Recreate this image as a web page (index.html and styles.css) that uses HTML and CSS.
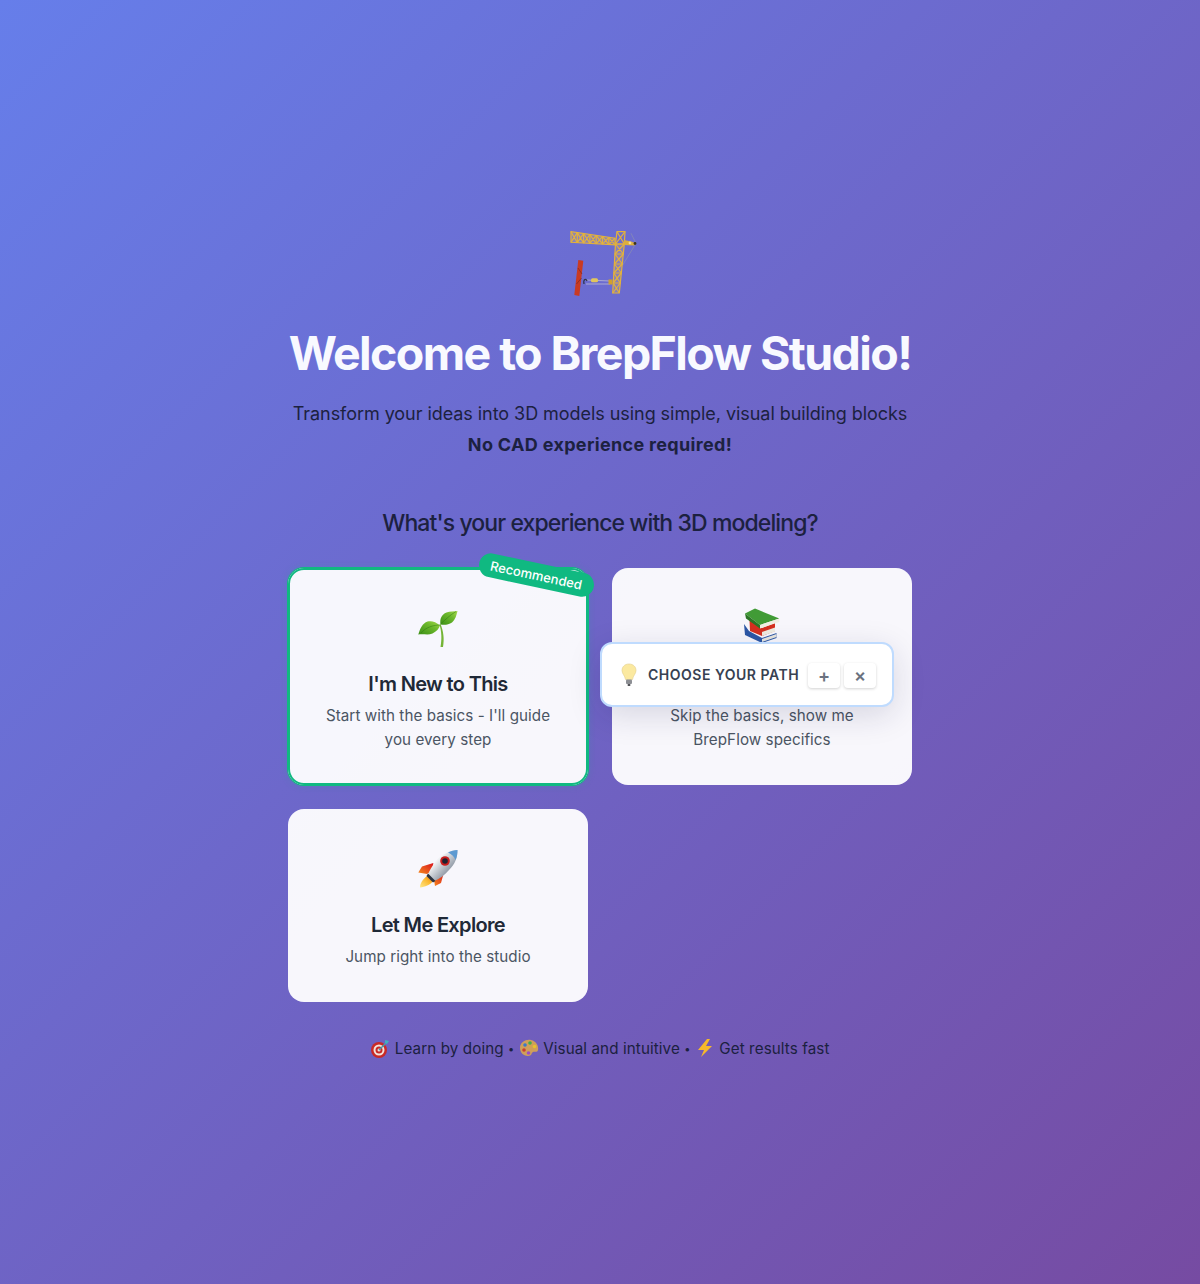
FILE: index.html
```html
<!DOCTYPE html>
<html lang="en">
<head>
<meta charset="utf-8">
<title>BrepFlow Studio</title>
<link rel="stylesheet" href="styles.css">
</head>
<body>
<main class="welcome">
  <svg class="crane" viewBox="0 0 68 66" aria-hidden="true">
    <path d="M61 2.300 L66 12.300 L52.700 34" fill="none" stroke="#8b8fb0" stroke-width=".7"/>
    <path d="M1 .7 L45 7.200 L44.500 13.900 L1 11.300Z" fill="#e8c263" fill-opacity=".25"/>
    <path d="M45 13 L54.300 13 L49.300 62 L42.700 62Z" fill="#e8c263" fill-opacity=".22"/>
    <g fill="none" stroke="#e3b23c" stroke-width="1.200">
      <path d="M1 .7 L45 7.200 V13.900 L1 11.300Z"/>
      <path d="M7.300 1.600V11.700M13.600 2.500V12.100M19.900 3.500V12.400M26.200 4.400V12.800M32.500 5.300V13.200M38.800 6.300V13.600"/>
      <path d="M1 .7L7.300 11.700M7.300 1.600L1 11.300M7.300 1.600L13.600 12.100M13.600 2.500L7.300 11.700M13.600 2.500L19.900 12.400M19.900 3.500L13.600 12.100M19.900 3.500L26.200 12.800M26.200 4.400L19.900 12.400M26.200 4.400L32.500 13.200M32.500 5.300L26.200 12.800M32.500 5.300L38.800 13.600M38.800 6.300L32.500 13.200M38.800 6.300L45 13.900M45 7.200L38.800 13.600"/>
      <path d="M47 .7 H55 L54.300 13 H45.500Z"/>
      <path d="M47 .7L54.300 13M55 .7L45.500 13"/>
      <path d="M45.500 13 L42.700 62 H49.300 L54.300 13Z"/>
      <path d="M45 23H53.300M44.400 33H52.300M43.800 42H51.300M43.200 52H50.300"/>
      <path d="M45.500 13L53.300 23M54.300 13L45 23M45 23L52.300 33M53.300 23L44.400 33M44.400 33L51.300 42M52.300 33L43.800 42M43.800 42L50.300 52M51.300 42L43.200 52M43.200 52L49.300 62M50.300 52L42.700 62"/>
    </g>
    <path d="M54 9 L61 10.500 L66 12.300 L64 14.500 L54 14Z" fill="#dcae3c"/>
    <circle cx="65" cy="12.500" r="1.400" fill="#3a3320"/>
    <circle cx="60" cy="12" r="1.400" fill="#f2dc98"/>
    <path d="M8.300 29 L13.300 29.700 L9.300 65 L4.300 64Z" fill="#c93a22"/>
    <path d="M8 37l4 6M6.500 53l5-6" stroke="#7d2a1c" stroke-width=".7"/>
    <path d="M16 49 L40 50 M16 53 L40 53" stroke="#c9c6d6" stroke-width=".7"/>
    <path d="M14 53c-1-5 2-6 3-3" fill="none" stroke="#2e3448" stroke-width="1.200"/>
    <rect x="21" y="47.300" width="7" height="4" rx="1.500" fill="#e2c65c"/>
    <rect x="38.500" y="48.500" width="4" height="5" fill="#cfa030"/>
  </svg>
  <h1 class="title">Welcome to BrepFlow Studio!</h1>
  <p class="lead">Transform your ideas into 3D models using simple, visual building blocks<br><strong>No CAD experience required!</strong></p>
  <h2 class="question">What's your experience with 3D modeling?</h2>
  <div class="paths">
    <button class="card card-picked">
      <span class="badge">Recommended</span>
      <svg class="card-icon" viewBox="0 0 48 48" aria-hidden="true">
        <defs>
          <linearGradient id="leaf" x1="0" y1="1" x2="1" y2="0"><stop offset="0" stop-color="#3c8f16"/><stop offset=".6" stop-color="#6cb82c"/><stop offset="1" stop-color="#a6d84c"/></linearGradient>
        </defs>
        <path d="M25.500 20 C27.500 26 28 34 26.500 42 L29 42 C30.500 34 29.500 26 26.500 19Z" fill="#74b436"/>
        <path d="M26 20.500 C22 16.500 17 15.500 13.500 16.500 C8.500 18 6 24 4.300 29.500 C9 28.500 14 30.500 18.500 28.500 C22.500 26.500 25 23.500 26 20.500Z" fill="url(#leaf)"/>
        <path d="M26.500 19.500 C25.500 14 27.500 9.500 32.500 7.500 C36 6 40 6.800 43.500 6 C42.500 10 41.500 14.500 38 17.500 C34.500 20 30 20 26.500 19.500Z" fill="url(#leaf)"/>
        <path d="M26 20 C20 20 12 22 7 28M26.500 19 C31 15 36 10 42 6.500" fill="none" stroke="#2f7a12" stroke-width=".5"/>
      </svg>
      <span class="card-title">I'm New to This</span>
      <span class="card-text">Start with the basics - I'll guide you every step</span>
    </button>
    <button class="card">
      <svg class="card-icon" viewBox="0 0 48 48" aria-hidden="true">
        <path d="M6 19 L11 26 L24 33 L38.500 28 V33 L24 38 L7 30Z" fill="#2c57a5"/>
        <path d="M24 34 L38.500 29 V32 L24 37Z" fill="#e8e6de"/>
        <path d="M11.500 15 L24 23 L37 18 V26 L24 31 L12 26Z" fill="#d5301f"/>
        <path d="M24 27 L37 22.500 V26.500 L24 31Z" fill="#efece0"/>
        <path d="M7 8.500 L17 3.500 L41.300 13.500 L22 20Z" fill="#419b36"/>
        <path d="M7 8.500 L22 20 V23.500 L8 13.500Z" fill="#2c7526"/>
        <path d="M22 20 L41.300 13.500 V17 L22 23.500Z" fill="#f1efe2"/>
      </svg>
      <span class="card-title">I Know CAD</span>
      <span class="card-text">Skip the basics, show me BrepFlow specifics</span>
    </button>
    <button class="card">
      <svg class="card-icon" viewBox="0 0 48 48" aria-hidden="true">
        <defs>
          <linearGradient id="hull" x1="0" y1="0" x2="1" y2="1"><stop offset="0" stop-color="#7fa6cf"/><stop offset=".32" stop-color="#f2f4f6"/><stop offset=".7" stop-color="#8f98a4"/><stop offset="1" stop-color="#4a5260"/></linearGradient>
          <linearGradient id="fin" x1="1" y1="0" x2="0" y2="1"><stop offset="0" stop-color="#d8141c"/><stop offset="1" stop-color="#f68a1e"/></linearGradient>
          <linearGradient id="flame" x1="0" y1="1" x2="1" y2="0"><stop offset="0" stop-color="#ffe98a"/><stop offset=".6" stop-color="#fbb62c"/><stop offset="1" stop-color="#ee6c1a"/></linearGradient>
        </defs>
        <path d="M19.300 17 L8 20.500 L4.300 26.500 L13 28 L19 24Z" fill="url(#fin)"/>
        <path d="M30 26 L27 37 L21 40 L19.500 31.500 L24 28Z" fill="url(#fin)"/>
        <path d="M13 30 C9 33 6 37 6 41.500 C11 41 16 39 19 35Z" fill="url(#flame)"/>
        <path d="M43.500 4 C35 4.500 27 9 22 15 C18 20 15 25 14 29 L20 35 C25 33 31 29 35 24 C41 18 43.500 12 43.500 4Z" fill="url(#hull)"/>
        <path d="M43.500 4 C40 4.200 37 5 34 6.500 C37 8 40 10 41.500 14 C43 11 43.500 7.500 43.500 4Z" fill="#5d9ad2"/>
        <path d="M14 27.500 L21.500 35 L19 36.500 L12.500 30Z" fill="#2b3340"/>
        <circle cx="31" cy="15" r="4.800" fill="#c81e1e"/>
        <circle cx="31" cy="15" r="2.800" fill="#1d2230"/>
      </svg>
      <span class="card-title">Let Me Explore</span>
      <span class="card-text">Jump right into the studio</span>
    </button>
  </div>
  <p class="perks">
    <svg class="perk-icon" viewBox="0 0 20 20" aria-hidden="true"><circle cx="9" cy="12" r="8" fill="#c92a26"/><circle cx="9" cy="12" r="5.500" fill="#f2e4dc"/><circle cx="9" cy="12" r="3.500" fill="#c92a26"/><circle cx="9" cy="12" r="1.500" fill="#f2e4dc"/><path d="M9 12 L17 4" stroke="#4a9aa8" stroke-width="1.500"/><path d="M15 2l4 1-2 3-2-1Z" fill="#3fb0bf"/></svg>
    Learn by doing <span class="dot">•</span> <svg class="perk-icon" viewBox="0 0 20 20" aria-hidden="true"><path d="M1 10C1 4 7 1 12 2s8 6 7 10c-1 3-3 1-5 2s-1 4-5 4C5 18 1 15 1 10Z" fill="#cf9f5a"/><circle cx="6" cy="7" r="1.800" fill="#3a78c9"/><circle cx="11" cy="5" r="1.800" fill="#3fae4b"/><circle cx="15.500" cy="8.500" r="1.800" fill="#e6c22e"/><circle cx="5" cy="12" r="1.800" fill="#c9402f"/><circle cx="9.500" cy="15" r="1.800" fill="#9b4dc4"/></svg> Visual and intuitive <span class="dot">•</span> <svg class="perk-icon" viewBox="0 0 20 20" aria-hidden="true"><path d="M12 1 L3 12 H9 L6 19 L17 8 H11 L15 1Z" fill="#f7b92a"/></svg> Get results fast
  </p>
</main>
<aside class="hint">
  <svg class="hint-bulb" viewBox="0 0 16 24" aria-hidden="true">
    <path d="M8 1C3.500 1 1 4 1 7.500c0 3.500 3 5 3.500 9h7c.5-4 3.500-5.500 3.500-9C15 4 12.500 1 8 1Z" fill="#fbe9a0" stroke="#e3cf8a" stroke-width=".6"/>
    <rect x="5" y="16.500" width="6" height="4.500" rx="1" fill="#8d8f94"/>
    <rect x="6.500" y="21" width="3" height="2" rx="1" fill="#4b4d52"/>
  </svg>
  <span class="hint-label">CHOOSE YOUR PATH</span>
  <span class="hint-btn">+</span>
  <span class="hint-btn">×</span>
</aside>
</body>
</html>
```
FILE: styles.css
```css
* { box-sizing: border-box; }
html, body { margin: 0; height: 100%; }
body {
  min-height: 1284px;
  display: flex;
  align-items: center;
  justify-content: center;
  position: relative;
  font-family: Inter, "Liberation Sans", sans-serif;
  background: linear-gradient(135deg, #667eea 0%, #764ba2 100%);
  color: #1f2937;
}
.welcome {
  width: 624px;
  display: flex;
  flex-direction: column;
  align-items: center;
  text-align: center;
}
.crane { width: 68px; height: 66px; margin: 7px 0 27px 7px; }
.title {
  margin: 0 0 17px;
  font-size: 46.5px;
  line-height: 58px;
  font-weight: 700;
  letter-spacing: -1.6px;
  color: #f8f9ff;
  white-space: nowrap;
}
.lead {
  margin: 0 0 48px;
  font-size: 18px;
  line-height: 30.6px;
  letter-spacing: -0.055px;
  color: #1c2140;
}
.lead strong { font-weight: 700; letter-spacing: .33px; }
.question {
  margin: 0 0 30.5px;
  font-size: 23px;
  line-height: 29px;
  font-weight: 500;
  letter-spacing: -0.9px;
  color: #1c2140;
}
.paths {
  width: 100%;
  display: grid;
  grid-template-columns: 300px 300px;
  gap: 24px;
  margin-bottom: 35px;
}
.card {
  position: relative;
  display: flex;
  flex-direction: column;
  align-items: center;
  padding: 32px 32px 32.4px;
  border: 0;
  border-radius: 16px;
  background: rgba(255, 255, 255, .95);
  font-family: inherit;
  text-align: center;
}
.card-picked {
  box-shadow: inset 0 0 0 2px #10b981, 0 0 0 1px #10b981, 0 0 8px rgba(16, 185, 129, .2);
}
.badge {
  position: absolute;
  top: -5px;
  right: -6px;
  padding: 4px 11.500px;
  border-radius: 12px;
  background: #10b981;
  color: #fff;
  font-size: 13px;
  line-height: 16px;
  font-weight: 500;
  transform: rotate(12deg);
}
.card-icon { width: 48px; height: 48px; margin: 4.8px 0 19.200px; }
.card-title {
  font-size: 20px;
  line-height: 24px;
  font-weight: 600;
  letter-spacing: -0.67px;
  color: #1f2937;
  margin-bottom: 8px;
}
.card-text {
  font-size: 15.2px;
  line-height: 24.3px;
  letter-spacing: .06px;
  color: #4b5563;
}
.perks {
  margin: 0 0 -1px;
  font-size: 15.2px;
  line-height: 24px;
  letter-spacing: .1px;
  color: #1c2140;
}
.dot { font-size: 11px; vertical-align: 1px; }
.perk-icon { width: 20px; height: 20px; vertical-align: -4px; }
.hint {
  position: absolute;
  left: 600px;
  top: 642px;
  width: 294px;
  height: 65px;
  display: flex;
  align-items: center;
  padding: 0 15px 0 19px;
  background: #fff;
  border: 2px solid #bfdbfe;
  border-radius: 12px;
  box-shadow: 0 8px 32px rgba(30, 27, 75, .15);
}
.hint-bulb { width: 16px; height: 24px; margin-right: 11px; flex: none; }
.hint-label {
  font-size: 14px;
  font-weight: 600;
  letter-spacing: .5px;
  color: #374151;
  white-space: nowrap;
  margin-right: 5px;
}
.hint-btn {
  flex: none;
  width: 32px;
  height: 25px;
  margin: 1px 0 0 4px;
  display: flex;
  align-items: center;
  justify-content: center;
  background: #fff;
  border-radius: 4px;
  box-shadow: 0 1px 3px rgba(0, 0, 0, .18);
  color: #6b7280;
  font-size: 18px;
  font-weight: 600;
}
```
